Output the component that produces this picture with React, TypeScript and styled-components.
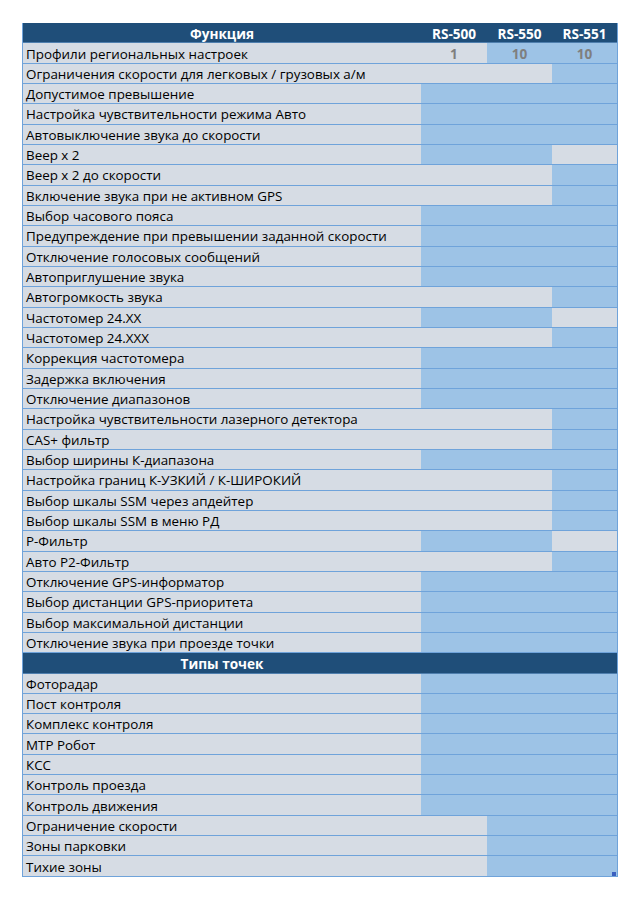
import React from "react";
import styled, { createGlobalStyle } from "styled-components";

const Global = createGlobalStyle`
  html, body { margin: 0; padding: 0; background: #ffffff; }
  body { font-family: "Open Sans", "Liberation Sans", sans-serif; }
`;

const GREY = "#d6dce4";
const BLUE = "#9dc3e6";
const DARK = "#1f4e79";
const LINE = "#6fa3da";

const Page = styled.div`
  padding: 23px 0 0 22px;
`;

const Table = styled.div`
  position: relative;
  width: 596px;
  display: flex;
  flex-direction: column;
  border-left: 1px solid ${LINE};
  border-right: 1px solid ${LINE};
  box-sizing: border-box;
`;

const Row = styled.div<{ $head?: boolean }>`
  display: grid;
  grid-template-columns: 398px 66px 65px 65px;
  height: 20.33px;
  box-sizing: border-box;
  border-bottom: 1px solid ${(p) => (p.$head ? "#4f7fae" : LINE)};
  background: ${(p) => (p.$head ? DARK : GREY)};
`;

const NameCell = styled.div<{ $span: number }>`
  grid-column: 1 / span ${(p) => p.$span};
  display: flex;
  align-items: center;
  padding: 1px 0 0 3px;
  font-size: 13.4px;
  color: #000;
  white-space: nowrap;
  overflow: hidden;
  background: ${GREY};
`;

const HeadCell = styled.div<{ $span?: number }>`
  grid-column: span ${(p) => p.$span ?? 1};
  display: flex;
  align-items: center;
  justify-content: center;
  padding-top: 1px;
  font-size: 13.6px;
  font-weight: 700;
  color: #ffffff;
  white-space: nowrap;
`;

const ValueCell = styled.div<{ $on: boolean }>`
  display: flex;
  align-items: center;
  justify-content: center;
  padding-top: 1px;
  font-size: 13.6px;
  font-weight: 700;
  color: #7f7f7f;
  background: ${(p) => (p.$on ? BLUE : GREY)};
`;

const Handle = styled.div`
  position: absolute;
  right: 1px;
  bottom: 1px;
  width: 4px;
  height: 4px;
  background: #3a5fbf;
`;

type Item = { name: string; cols: [boolean, boolean, boolean]; vals?: [string, string, string] };

const A: [boolean, boolean, boolean] = [true, true, true];
const L: [boolean, boolean, boolean] = [false, false, true];
const F: [boolean, boolean, boolean] = [true, true, false];
const T: [boolean, boolean, boolean] = [false, true, true];

const functions: Item[] = [
  { name: "Профили региональных настроек", cols: [false, true, true], vals: ["1", "10", "10"] },
  { name: "Ограничения скорости для легковых / грузовых а/м", cols: L },
  { name: "Допустимое превышение", cols: A },
  { name: "Настройка чувствительности режима Авто", cols: A },
  { name: "Автовыключение звука до скорости", cols: A },
  { name: "Веер х 2", cols: F },
  { name: "Веер х 2 до скорости", cols: L },
  { name: "Включение звука при не активном GPS", cols: L },
  { name: "Выбор часового пояса", cols: A },
  { name: "Предупреждение при превышении заданной скорости", cols: A },
  { name: "Отключение голосовых сообщений", cols: A },
  { name: "Автоприглушение звука", cols: A },
  { name: "Автогромкость звука", cols: L },
  { name: "Частотомер 24.XX", cols: F },
  { name: "Частотомер 24.XXX", cols: L },
  { name: "Коррекция частотомера", cols: A },
  { name: "Задержка включения", cols: A },
  { name: "Отключение диапазонов", cols: A },
  { name: "Настройка чувствительности лазерного детектора", cols: L },
  { name: "CAS+ фильтр", cols: L },
  { name: "Выбор ширины К-диапазона", cols: A },
  { name: "Настройка границ К-УЗКИЙ / К-ШИРОКИЙ", cols: L },
  { name: "Выбор шкалы SSM через апдейтер", cols: L },
  { name: "Выбор шкалы SSM в меню РД", cols: L },
  { name: "Р-Фильтр", cols: F },
  { name: "Авто Р2-Фильтр", cols: L },
  { name: "Отключение GPS-информатор", cols: A },
  { name: "Выбор дистанции GPS-приоритета", cols: A },
  { name: "Выбор максимальной дистанции", cols: A },
  { name: "Отключение звука при проезде точки", cols: A },
];

const points: Item[] = [
  { name: "Фоторадар", cols: A },
  { name: "Пост контроля", cols: A },
  { name: "Комплекс контроля", cols: A },
  { name: "МТР Робот", cols: A },
  { name: "КСС", cols: A },
  { name: "Контроль проезда", cols: A },
  { name: "Контроль движения", cols: A },
  { name: "Ограничение скорости", cols: T },
  { name: "Зоны парковки", cols: T },
  { name: "Тихие зоны", cols: T },
];

function DataRow({ item }: { item: Item }) {
  let span = 1;
  for (let i = 0; i < 3; i++) {
    if (item.cols[i] || item.vals) break;
    span++;
  }
  const rest = [0, 1, 2].slice(span - 1);
  return (
    <Row>
      <NameCell $span={span}>{item.name}</NameCell>
      {rest.map((i) => (
        <ValueCell key={i} $on={item.cols[i]}>
          {item.vals ? item.vals[i] : ""}
        </ValueCell>
      ))}
    </Row>
  );
}

export default function App() {
  return (
    <Page>
      <Global />
      <Table>
        <Row $head>
          <HeadCell>Функция</HeadCell>
          <HeadCell>RS-500</HeadCell>
          <HeadCell>RS-550</HeadCell>
          <HeadCell>RS-551</HeadCell>
        </Row>
        {functions.map((f) => (
          <DataRow key={f.name} item={f} />
        ))}
        <Row $head>
          <HeadCell>Типы точек</HeadCell>
        </Row>
        {points.map((f) => (
          <DataRow key={f.name} item={f} />
        ))}
        <Handle />
      </Table>
    </Page>
  );
}
